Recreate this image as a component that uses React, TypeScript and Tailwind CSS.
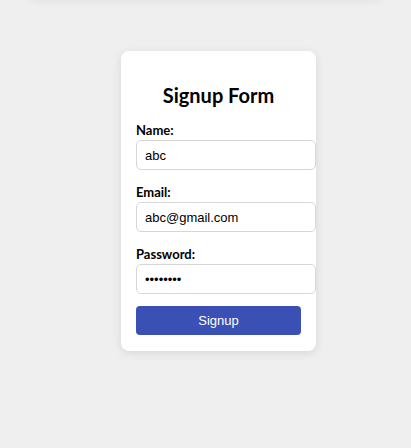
export default function App() {
  const fields = [
    { label: 'Name:', type: 'text', value: 'abc' },
    { label: 'Email:', type: 'email', value: 'abc@gmail.com' },
    { label: 'Password:', type: 'password', value: 'abcdefgh' },
  ];

  return (
    <div className="min-h-[448px] w-full bg-[#efefef] overflow-hidden">
      {/* shadow of a panel above the fold */}
      <div className="mx-auto -mt-[20px] h-[20px] w-[350px] bg-[#efefef] shadow-[0_0_10px_rgba(0,0,0,0.07)]" />

      <div className="pl-[121px] pt-[51px]">
        <form
          className="w-[195px] rounded-[8px] bg-white px-[15px] pt-[16px] pb-[16px] shadow-[0_2px_10px_rgba(0,0,0,0.10)]"
          onSubmit={(e) => e.preventDefault()}
        >
          <h2 className="mt-[16px] mb-[13px] text-center text-[20px] leading-[24px] font-bold text-black [font-family:Lato,sans-serif]">
            Signup Form
          </h2>

          {fields.map((f) => (
            <div key={f.label} className="flex flex-col">
              <label className="h-[20px] text-[13px] leading-[20px] font-bold text-black [font-family:Lato,sans-serif]">
                {f.label}
              </label>
              <input
                type={f.type}
                defaultValue={f.value}
                className="mb-[12px] h-[30px] w-[180px] rounded-[5px] border border-[#d6d6d6] bg-white px-[8px] text-[13px] text-black outline-none [font-family:'Liberation_Sans',Arial,sans-serif]"
              />
            </div>
          ))}

          <button
            type="submit"
            className="h-[29px] w-[165px] rounded-[4px] bg-[#3a50b5] text-[13px] text-white [font-family:'Liberation_Sans',Arial,sans-serif]"
          >
            Signup
          </button>
        </form>
      </div>
    </div>
  );
}
